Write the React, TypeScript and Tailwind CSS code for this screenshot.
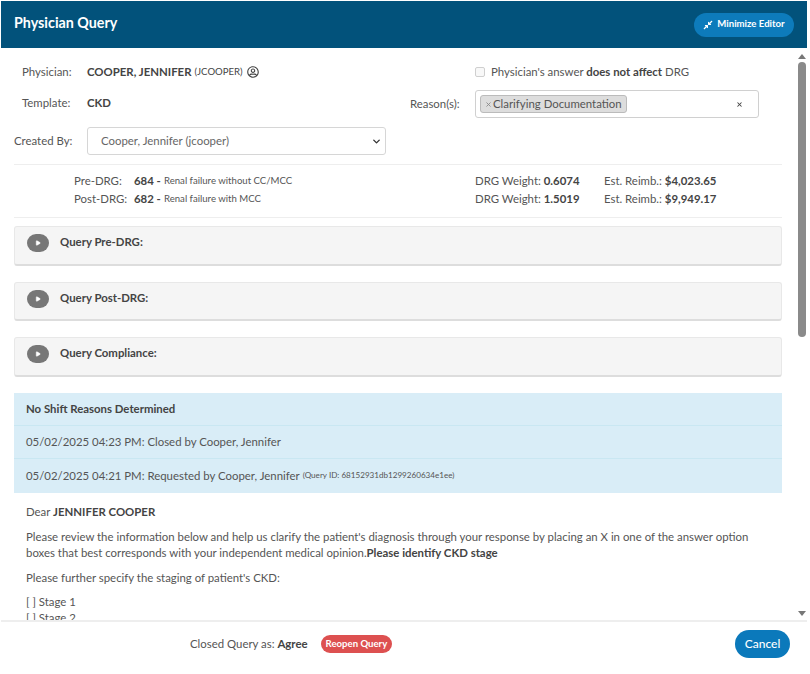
import { ChevronDown, Play, X } from "lucide-react";
import { FaCompressAlt, FaRegUserCircle } from "react-icons/fa";

function QueryPanel({ title }: { title: string }) {
  return (
    <div className="flex h-[39.5px] items-start rounded-[3px] border border-[#e8e8e8] border-b-2 border-b-[#dddddd] bg-[#f5f5f5] pl-[12px] pt-[7px]">
      <span className="flex h-[18px] w-[22px] items-center justify-center rounded-full bg-[#777777]">
        <Play className="size-[6px] fill-white text-white" />
      </span>
      <span className="ml-[11px] text-[11.4px] leading-[16px] font-bold text-[#444444]">{title}</span>
    </div>
  );
}

function DrgRow({ label, code, desc, weight, reimb }: { label: string; code: string; desc: string; weight: string; reimb: string }) {
  return (
    <div className="flex h-[18px] items-center text-[#555555]">
      <span className="w-[60px]">{label}</span>
      <span className="w-[30px] font-bold text-[#444444]">{code} -</span>
      <span className="w-[311px] text-[9.6px]">{desc}</span>
      <span className="w-[129px]">
        DRG Weight: <b className="text-[#444444]">{weight}</b>
      </span>
      <span>
        Est. Reimb.: <b className="text-[#444444]">{reimb}</b>
      </span>
    </div>
  );
}

export default function App() {
  return (
    <div className="h-[674px] w-[810px] overflow-hidden bg-white pt-px pl-px font-['Lato',sans-serif] text-[11.4px] text-[#555555]">
      <div className="flex h-[673px] w-[806px] flex-col">
        <header className="flex h-[47px] shrink-0 items-center justify-between bg-[#02527b] pr-[13px] pl-[13px]">
          <h1 className="-mt-[3px] text-[14.3px] font-bold text-white">Physician Query</h1>
          <button type="button" className="flex h-[24px] w-[100px] items-center justify-center gap-[4px] rounded-full bg-[#0d7bbb] text-[9.6px] font-bold text-white">
            <FaCompressAlt className="size-[10px]" aria-hidden="true" />
            Minimize Editor
          </button>
        </header>

        <div className="flex min-h-0 flex-1">
          <main className="min-w-0 flex-1 overflow-hidden pt-[12px] pl-[13px]">
            <div className="w-[768px]">
              <div className="flex">
                <div className="w-[396px]">
                  <div className="flex h-[24px] items-center pl-[8px]">
                    <span className="w-[65px]">Physician:</span>
                    <b className="text-[#444444]">COOPER, JENNIFER</b>
                    <span className="ml-[3px] text-[9.6px] text-[#444444]">(JCOOPER)</span>
                    <FaRegUserCircle className="ml-[4px] size-[12px] text-[#444444]" aria-hidden="true" />
                  </div>
                  <div className="mt-[7px] flex h-[24px] items-center pl-[8px]">
                    <span className="w-[65px]">Template:</span>
                    <b className="text-[#444444]">CKD</b>
                  </div>
                  <div className="mt-[12px] flex items-center">
                    <span className="w-[73px]">Created By:</span>
                    <div className="flex h-[28px] w-[299px] items-center justify-between rounded-[3px] border border-[#d6d6d6] pr-[3px] pl-[13px] text-[#666666]">
                      Cooper, Jennifer (jcooper)
                      <ChevronDown className="size-[11px] text-[#333333]" strokeWidth={3} />
                    </div>
                  </div>
                </div>
                <div className="flex-1">
                  <div className="flex h-[24px] items-center pl-[65px]">
                    <span className="size-[10px] rounded-[2px] border border-[#cfcfcf] bg-[#f8f8f8]" />
                    <span className="ml-[6px]">
                      Physician's answer <b className="text-[#444444]">does not affect</b> DRG
                    </span>
                  </div>
                  <div className="mt-[6px] flex items-center">
                    <span className="w-[65px]">Reason(s):</span>
                    <div className="flex h-[28px] w-[284px] items-center justify-between rounded-[3px] border border-[#d0d0d0] pr-[15px] pl-[4px]">
                      <span className="flex h-[18px] items-center rounded-[3px] border border-[#bbbbbb] bg-[#dddddd] pr-[4px] pl-[4px] text-[#555555]">
                        <X className="mr-px size-[7px] text-[#888888]" strokeWidth={3} />
                        Clarifying Documentation
                      </span>
                      <X className="size-[7px] text-[#444444]" strokeWidth={3.5} />
                    </div>
                  </div>
                </div>
              </div>

              <div className="mt-[9px] border-y border-[#eeeeee] pt-[7px] pb-[9px] pl-[60px]">
                <DrgRow label="Pre-DRG:" code="684" desc="Renal failure without CC/MCC" weight="0.6074" reimb="$4,023.65" />
                <DrgRow label="Post-DRG:" code="682" desc="Renal failure with MCC" weight="1.5019" reimb="$9,949.17" />
              </div>

              <div className="mt-[8px] flex flex-col gap-[16px]">
                <QueryPanel title="Query Pre-DRG:" />
                <QueryPanel title="Query Post-DRG:" />
                <QueryPanel title="Query Compliance:" />
              </div>

              <div className="mt-[16.5px] bg-[#d9edf7]">
                <div className="flex h-[33px] items-center border-b border-[#c9e7f2] pl-[12px] font-bold text-[#444444]">No Shift Reasons Determined</div>
                <div className="flex h-[33px] items-center border-b border-[#c9e7f2] pl-[12px]">05/02/2025 04:23 PM: Closed by Cooper, Jennifer</div>
                <div className="flex h-[33.5px] items-center pb-px pl-[12px]">
                  05/02/2025 04:21 PM: Requested by Cooper, Jennifer
                  <span className="ml-[3px] text-[8.1px]">(Query ID: 68152931db1299260634e1ee)</span>
                </div>
              </div>

              <div className="px-[12px] pt-[11.5px]">
                <p className="leading-[16px]">
                  Dear <b className="text-[#444444]">JENNIFER COOPER</b>
                </p>
                <p className="mt-[9px] leading-[16px]">
                  Please review the information below and help us clarify the patient's diagnosis through your response by placing an X in one of the answer option boxes that best corresponds with your independent medical opinion.
                  <b className="text-[#444444]">Please identify CKD stage</b>
                </p>
                <p className="mt-[9px] leading-[16px]">Please further specify the staging of patient's CKD:</p>
                <p className="mt-[8px] leading-[16px]">[ ] Stage 1</p>
                <p className="leading-[16px]">[ ] Stage 2</p>
              </div>
            </div>
          </main>

          <div className="flex w-[11px] shrink-0 flex-col items-center pt-[6px] pb-[4px]">
            <span className="h-0 w-0 border-x-[4px] border-b-[5px] border-x-transparent border-b-[#777777]" />
            <span className="mt-[3px] h-[275px] w-[8px] rounded-full bg-[#8a8a8a]" />
            <span className="mt-auto h-0 w-0 border-x-[4px] border-t-[5px] border-x-transparent border-t-[#777777]" />
          </div>
        </div>

        <footer className="flex h-[54px] shrink-0 items-start border-t-2 border-[#eeeeee] pt-[8px] pr-[17px]">
          <div className="ml-[189px] flex h-[28px] items-center">
            Closed Query as:&nbsp;<b className="text-[#444444]">Agree</b>
            <span className="ml-[13px] flex h-[18px] items-center rounded-full bg-[#dd5050] px-[5px] text-[9.6px] font-bold text-white">Reopen Query</span>
          </div>
          <button type="button" className="ml-auto h-[28px] w-[55px] rounded-full bg-[#0b79bb] pb-px text-[12px] font-medium text-white">Cancel</button>
        </footer>
      </div>
    </div>
  );
}
